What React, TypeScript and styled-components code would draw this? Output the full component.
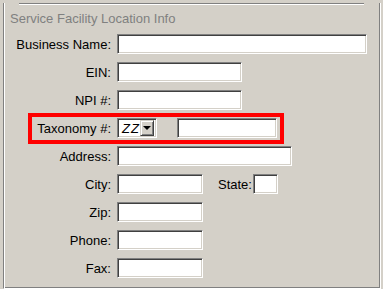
import styled, { createGlobalStyle } from "styled-components";

const GlobalStyle = createGlobalStyle`
  html, body {
    margin: 0;
    padding: 0;
    background: #d4d0c8;
  }
  body {
    font-family: "Liberation Sans", Arial, sans-serif;
    font-size: 13px;
    color: #000;
  }
`;

const Frame = styled.div`
  box-sizing: border-box;
  margin-left: 3px;
  width: 378px;
  height: 286px;
  border-left: 1px solid #808080;
  border-right: 1px solid #fff;
  border-bottom: 1px solid #fff;
  box-shadow: inset 1px 0 #fff, inset -1px 0 #808080, inset 0 -1px #808080;
`;

const Rule = styled.div`
  margin: 3px 0 0 15px;
  width: 345px;
  height: 1px;
  background: #808080;
  border-bottom: 1px solid #fff;
`;

const Title = styled.div`
  margin: 6px 0 0 6px;
  height: 15px;
  line-height: 15px;
  color: #808080;
`;

const Form = styled.div`
  display: flex;
  flex-direction: column;
  gap: 8px;
  margin-top: 8px;
`;

const Row = styled.div`
  position: relative;
  display: grid;
  grid-template-columns: 107px 1fr;
  column-gap: 6px;
  align-items: center;
  height: 20px;
`;

const Label = styled.label`
  text-align: right;
  white-space: nowrap;
`;

const Fields = styled.div<{ $gap?: number }>`
  display: flex;
  align-items: center;
  gap: ${(p) => p.$gap ?? 0}px;
`;

const Input = styled.div<{ $w: number }>`
  box-sizing: border-box;
  width: ${(p) => p.$w}px;
  height: 20px;
  background: #fff;
  border-top: 1px solid #808080;
  border-left: 1px solid #808080;
  border-right: 1px solid #fff;
  border-bottom: 1px solid #fff;
  box-shadow: inset 1px 1px #404040, inset -1px -1px #d4d0c8;
`;

const Select = styled(Input)`
  display: flex;
  align-items: center;
  justify-content: space-between;
  padding: 2px 2px 2px 4px;
`;

const SelectText = styled.span`
  font-style: italic;
  letter-spacing: 1px;
`;

const DropButton = styled.div`
  box-sizing: border-box;
  width: 16px;
  height: 16px;
  background: #d4d0c8;
  border-top: 1px solid #d4d0c8;
  border-left: 1px solid #d4d0c8;
  border-right: 1px solid #404040;
  border-bottom: 1px solid #404040;
  box-shadow: inset 1px 1px #fff, inset -1px -1px #808080;
  display: flex;
  align-items: center;
  justify-content: center;
`;

const Arrow = styled.div`
  width: 0;
  height: 0;
  border-left: 4px solid transparent;
  border-right: 4px solid transparent;
  border-top: 4px solid #000;
`;

const InlineLabel = styled.span`
  margin: 0 1px 0 15px;
`;

const Highlight = styled.div`
  position: absolute;
  left: 24px;
  top: -5px;
  width: 256px;
  height: 31px;
  box-sizing: border-box;
  border: 4px solid #ff0000;
  pointer-events: none;
`;

export default function App() {
  return (
    <>
      <GlobalStyle />
      <Frame>
        <Rule />
        <Title>Service Facility Location Info</Title>
        <Form>
          <Row>
            <Label>Business Name:</Label>
            <Input $w={250} />
          </Row>
          <Row>
            <Label>EIN:</Label>
            <Input $w={125} />
          </Row>
          <Row>
            <Label>NPI #:</Label>
            <Input $w={125} />
          </Row>
          <Row>
            <Highlight />
            <Label>Taxonomy #:</Label>
            <Fields $gap={20}>
              <Select $w={40}>
                <SelectText>ZZ</SelectText>
                <DropButton>
                  <Arrow />
                </DropButton>
              </Select>
              <Input $w={100} />
            </Fields>
          </Row>
          <Row>
            <Label>Address:</Label>
            <Input $w={175} />
          </Row>
          <Row>
            <Label>City:</Label>
            <Fields>
              <Input $w={86} />
              <InlineLabel>State:</InlineLabel>
              <Input $w={25} />
            </Fields>
          </Row>
          <Row>
            <Label>Zip:</Label>
            <Input $w={86} />
          </Row>
          <Row>
            <Label>Phone:</Label>
            <Input $w={86} />
          </Row>
          <Row>
            <Label>Fax:</Label>
            <Input $w={86} />
          </Row>
        </Form>
      </Frame>
    </>
  );
}
